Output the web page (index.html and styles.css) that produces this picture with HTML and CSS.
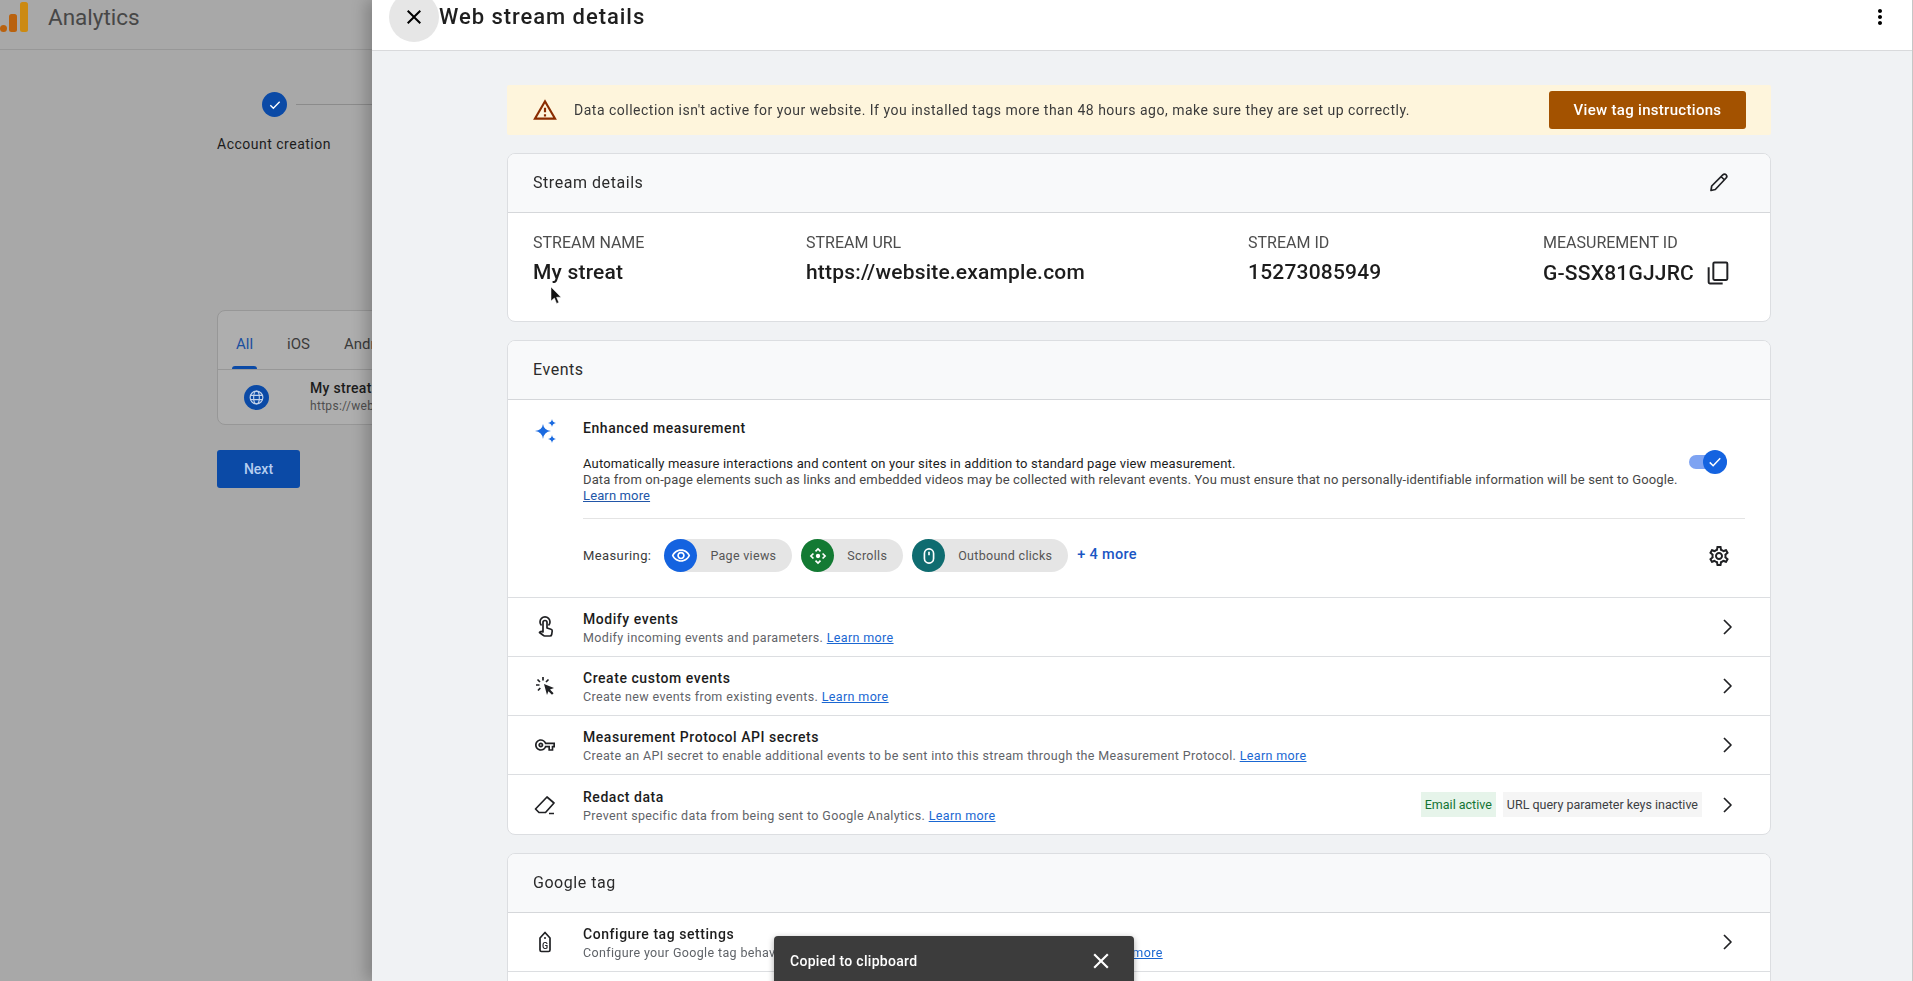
FILE: index.html
```html
<!DOCTYPE html>
<html lang="en">
<head>
    <meta charset="UTF-8">
    <title>Web stream details</title>
    <link rel="stylesheet" href="styles.css">
</head>

<body>
    <div class="page">
        <!-- setup page behind the panel, dimmed -->
        <div class="backdrop">
            <div class="app-bar">
                <svg class="logo" viewBox="0 0 28 30" width="28" height="30">
                    <circle cx="3.5" cy="26.5" r="3.5" fill="#b9620f"/>
                    <rect x="9" y="12" width="8" height="18" rx="2.5" fill="#b9620f"/>
                    <rect x="20" y="0" width="8" height="30" rx="2.5" fill="#cc8a12"/>
                </svg>
                <span class="app-name">Analytics</span>
            </div>
            <div class="setup">
                <div class="stepper">
                    <div class="step-track">
                        <span class="step-dot">
                            <svg viewBox="0 0 24 24" width="16" height="16"><path class="line-white" d="M5 12.5l4.5 4.5L19 7"/></svg>
                        </span>
                        <span class="step-line"></span>
                    </div>
                    <div class="step-label">Account creation</div>
                </div>
                <div class="stream-list">
                    <div class="stream-tabs">
                        <span class="stream-tab active">All</span>
                        <span class="stream-tab">iOS</span>
                        <span class="stream-tab">Android</span>
                    </div>
                    <div class="stream-item">
                        <span class="globe">
                            <svg viewBox="0 0 24 24" width="17" height="17">
                                <circle class="line-pale" cx="12" cy="12" r="9"/>
                                <ellipse class="line-pale" cx="12" cy="12" rx="4" ry="9"/>
                                <path class="line-pale" d="M3.5 9h17M3.5 15h17"/>
                            </svg>
                        </span>
                        <div>
                            <div class="stream-name">My streat</div>
                            <div class="stream-url">https://website.example.com</div>
                        </div>
                    </div>
                </div>
                <button class="next-btn">Next</button>
            </div>
        </div>

        <div class="panel">
            <header class="panel-head">
                <span class="close-btn">
                    <svg viewBox="0 0 24 24" width="24" height="24"><path d="M19 6.41L17.59 5 12 10.59 6.41 5 5 6.41 10.59 12 5 17.59 6.41 19 12 13.41 17.59 19 19 17.59 13.41 12z"/></svg>
                </span>
                <h1 class="panel-title">Web stream details</h1>
                <svg class="kebab" viewBox="0 0 24 24" width="24" height="24"><path d="M12 8c1.1 0 2-.9 2-2s-.9-2-2-2-2 .9-2 2 .9 2 2 2zm0 2c-1.1 0-2 .9-2 2s.9 2 2 2 2-.9 2-2-.9-2-2-2zm0 6c-1.1 0-2 .9-2 2s.9 2 2 2 2-.9 2-2-.9-2-2-2z"/></svg>
            </header>

            <main class="panel-body">
                <div class="banner">
                    <svg class="banner-icon" viewBox="0 0 24 24" width="26" height="26"><path d="M1 21h22L12 2 1 21zm3.47-2L12 5.99 19.53 19H4.47zM11 16h2v2h-2zm0-6h2v4h-2z"/></svg>
                    <span class="banner-text">Data collection isn't active for your website. If you installed tags more than 48 hours ago, make sure they are set up correctly.</span>
                    <button class="banner-btn">View tag instructions</button>
                </div>

                <section class="card">
                    <div class="card-head">
                        <span>Stream details</span>
                        <svg class="head-icon" viewBox="0 0 24 24" width="24" height="24"><path class="line-dark" d="M4 20.500l.7-4.500L15.800 4.800c1-1 2.400-1 3.300 0s.9 2.300 0 3.200L8.300 19.500zM14 6.500l3.600 3.500"/></svg>
                    </div>
                    <div class="details">
                        <div>
                            <div class="detail-label">STREAM NAME</div>
                            <div class="detail-value">My streat</div>
                        </div>
                        <div>
                            <div class="detail-label">STREAM URL</div>
                            <div class="detail-value">https://website.example.com</div>
                        </div>
                        <div>
                            <div class="detail-label">STREAM ID</div>
                            <div class="detail-value">15273085949</div>
                        </div>
                        <div>
                            <div class="detail-label">MEASUREMENT ID</div>
                            <div class="detail-value with-icon">G-SSX81GJJRC
                                <svg viewBox="0 0 24 24" width="28" height="28"><rect class="line-dark" x="8" y="3" width="12" height="15" rx="1"/><path class="line-dark" d="M4 7v13a1 1 0 0 0 1 1h11"/></svg>
                            </div>
                        </div>
                    </div>
                </section>

                <section class="card">
                    <div class="card-head"><span>Events</span></div>
                    <div class="enhanced">
                        <svg class="row-icon sparkle" viewBox="0 0 26 26" width="26" height="26">
                            <path d="M10 6Q10.8 12.2 18 13 10.8 13.8 10 21 9.2 13.8 2 13 9.2 12.2 10 6z"/>
                            <path d="M19 1Q19.4 4.6 23 5 19.4 5.4 19 9 18.6 5.4 15 5 18.6 4.6 19 1z"/>
                            <path d="M19 17Q19.4 20.6 23 21 19.4 21.4 19 25 18.6 21.4 15 21 18.6 20.6 19 17z"/>
                        </svg>
                        <div class="enhanced-body">
                            <div class="enhanced-top">
                                <div class="enhanced-text">
                                    <div class="row-title">Enhanced measurement</div>
                                    <p class="enhanced-desc">
                                        <span class="desc-dark">Automatically measure interactions and content on your sites in addition to standard page view measurement.</span><br>
                                        Data from on-page elements such as links and embedded videos may be collected with relevant events. You must ensure that no personally-identifiable information will be sent to Google.<br>
                                        <a class="learn dark" href="#">Learn more</a>
                                    </p>
                                </div>
                                <div class="toggle">
                                    <span class="toggle-knob">
                                        <svg viewBox="0 0 24 24" width="18" height="18"><path class="line-white" d="M5 12.5l4.5 4.5L19 7"/></svg>
                                    </span>
                                </div>
                            </div>
                            <div class="measuring">
                                <span class="measuring-label">Measuring:</span>
                                <span class="chip">
                                    <span class="chip-icon blue">
                                        <svg viewBox="0 0 24 24" width="20" height="20"><path d="M12 6c3.79 0 7.17 2.13 8.82 5.5C19.17 14.87 15.79 17 12 17s-7.17-2.13-8.82-5.5C4.83 8.13 8.21 6 12 6m0-2C7 4 2.73 7.11 1 11.5 2.73 15.89 7 19 12 19s9.27-3.11 11-7.5C21.27 7.11 17 4 12 4zm0 5c1.38 0 2.5 1.12 2.5 2.5S13.38 14 12 14s-2.5-1.12-2.5-2.5S10.62 9 12 9m0-2c-2.48 0-4.5 2.02-4.5 4.5S9.52 16 12 16s4.5-2.02 4.5-4.5S14.48 7 12 7z"/></svg>
                                    </span>
                                    Page views
                                </span>
                                <span class="chip">
                                    <span class="chip-icon green">
                                        <svg viewBox="0 0 24 24" width="20" height="20"><circle cx="12" cy="12" r="2.6"/><path class="line-white" d="M9 6.5l3-3 3 3M9 17.5l3 3 3-3M6.5 9l-3 3 3 3M17.5 9l3 3-3 3"/></svg>
                                    </span>
                                    Scrolls
                                </span>
                                <span class="chip">
                                    <span class="chip-icon teal">
                                        <svg viewBox="0 0 24 24" width="20" height="20"><rect class="line-white" x="6.5" y="3.5" width="11" height="17" rx="5.5"/><path class="line-white" d="M12 7v4"/></svg>
                                    </span>
                                    Outbound clicks
                                </span>
                                <a class="more-link" href="#">+ 4 more</a>
                                <svg class="gear" viewBox="0 0 24 24" width="24" height="24"><path d="M19.43 12.98c.04-.32.07-.64.07-.98 0-.34-.03-.66-.07-.98l2.11-1.65c.19-.15.24-.42.12-.64l-2-3.46c-.09-.16-.26-.25-.44-.25-.06 0-.12.01-.17.03l-2.49 1c-.52-.4-1.08-.73-1.69-.98l-.38-2.65C14.46 2.18 14.25 2 14 2h-4c-.25 0-.46.18-.49.42l-.38 2.65c-.61.25-1.17.59-1.69.98l-2.49-1c-.06-.02-.12-.03-.18-.03-.17 0-.34.09-.43.25l-2 3.46c-.13.22-.07.49.12.64l2.11 1.65c-.04.32-.07.65-.07.98 0 .33.03.66.07.98l-2.11 1.65c-.19.15-.24.42-.12.64l2 3.46c.09.16.26.25.44.25.06 0 .12-.01.17-.03l2.49-1c.52.4 1.08.73 1.69.98l.38 2.65c.03.24.24.42.49.42h4c.25 0 .46-.18.49-.42l.38-2.65c.61-.25 1.17-.59 1.69-.98l2.49 1c.06.02.12.03.18.03.17 0 .34-.09.43-.25l2-3.46c.12-.22.07-.49-.12-.64l-2.11-1.65zm-1.98-1.71c.04.31.05.52.05.73 0 .21-.02.43-.05.73l-.14 1.13.89.7 1.08.84-.7 1.21-1.27-.51-1.04-.42-.9.68c-.43.32-.84.56-1.25.73l-1.06.43-.16 1.13-.2 1.35h-1.4l-.19-1.35-.16-1.13-1.06-.43c-.43-.18-.83-.41-1.23-.71l-.91-.7-1.06.43-1.27.51-.7-1.21 1.08-.84.89-.7-.14-1.13c-.03-.31-.05-.54-.05-.74s.02-.43.05-.73l.14-1.13-.89-.7-1.08-.84.7-1.21 1.27.51 1.04.42.9-.68c.43-.32.84-.56 1.25-.73l1.06-.43.16-1.13.2-1.35h1.39l.19 1.35.16 1.13 1.06.43c.43.18.83.41 1.23.71l.91.7 1.06-.43 1.27-.51.7 1.21-1.07.85-.89.7.14 1.13zM12 8c-2.21 0-4 1.79-4 4s1.79 4 4 4 4-1.79 4-4-1.79-4-4-4zm0 6c-1.1 0-2-.9-2-2s.9-2 2-2 2 .9 2 2-.9 2-2 2z"/></svg>
                            </div>
                        </div>
                    </div>

                    <div class="row">
                        <svg class="row-icon" viewBox="0 0 24 24" width="24" height="24"><path class="line-dark" d="M8.5 10.5a5 5 0 1 1 7 0M10 17V7.5a2 2 0 0 1 4 0V13l4 1.2c.9.3 1.3 1 1.2 1.8l-.5 3.5c-.2 1-1 1.5-1.8 1.5h-5.2c-.6 0-1.1-.2-1.5-.7L6.5 17.5l1-.9c.4-.3.9-.3 1.3 0z"/></svg>
                        <div class="row-main">
                            <div class="row-title">Modify events</div>
                            <div class="row-sub">Modify incoming events and parameters. <a class="learn" href="#">Learn more</a></div>
                        </div>
                        <svg class="chevron" viewBox="0 0 24 24" width="24" height="24"><path class="line-dark" d="M9 5l7 7-7 7"/></svg>
                    </div>
                    <div class="row">
                        <svg class="row-icon" viewBox="0 0 24 24" width="24" height="24"><path d="M11 10l10 4-4 1.6 3.6 3.6-1.6 1.6-3.6-3.6L14 21z"/><path class="line-dark" d="M10 3v3.5M4.5 5.5L7 8M3 11h3.5M5 16.5L7.3 14M15.5 5.5L13 8"/></svg>
                        <div class="row-main">
                            <div class="row-title">Create custom events</div>
                            <div class="row-sub">Create new events from existing events. <a class="learn" href="#">Learn more</a></div>
                        </div>
                        <svg class="chevron" viewBox="0 0 24 24" width="24" height="24"><path class="line-dark" d="M9 5l7 7-7 7"/></svg>
                    </div>
                    <div class="row">
                        <svg class="row-icon key" viewBox="0 0 24 24" width="20" height="20"><path d="M22 19h-6v-4h-2.68c-1.14 2.42-3.6 4-6.32 4-3.86 0-7-3.14-7-7s3.14-7 7-7c2.72 0 5.17 1.58 6.32 4H24v6h-2v4zm-4-2h2v-4h2v-2H11.94l-.23-.67C11.01 8.34 9.11 7 7 7c-2.76 0-5 2.24-5 5s2.24 5 5 5c2.11 0 4.01-1.34 4.71-3.33l.23-.67H18v4zM7 15c-1.65 0-3-1.35-3-3s1.35-3 3-3 3 1.35 3 3-1.35 3-3 3zm0-4c-.55 0-1 .45-1 1s.45 1 1 1 1-.45 1-1-.45-1-1-1z"/></svg>
                        <div class="row-main">
                            <div class="row-title">Measurement Protocol API secrets</div>
                            <div class="row-sub">Create an API secret to enable additional events to be sent into this stream through the Measurement Protocol. <a class="learn" href="#">Learn more</a></div>
                        </div>
                        <svg class="chevron" viewBox="0 0 24 24" width="24" height="24"><path class="line-dark" d="M9 5l7 7-7 7"/></svg>
                    </div>
                    <div class="row">
                        <svg class="row-icon" viewBox="0 0 24 24" width="24" height="24"><path class="line-dark" d="M14 4l7 6-8.5 9.5H6L2.5 16zM16 20.5h5"/></svg>
                        <div class="row-main">
                            <div class="row-title">Redact data</div>
                            <div class="row-sub">Prevent specific data from being sent to Google Analytics. <a class="learn" href="#">Learn more</a></div>
                        </div>
                        <span class="tag tag-green">Email active</span>
                        <span class="tag tag-gray">URL query parameter keys inactive</span>
                        <svg class="chevron" viewBox="0 0 24 24" width="24" height="24"><path class="line-dark" d="M9 5l7 7-7 7"/></svg>
                    </div>
                </section>

                <section class="card">
                    <div class="card-head"><span>Google tag</span></div>
                    <div class="row">
                        <svg class="row-icon" viewBox="0 0 24 24" width="24" height="24"><path class="line-dark" d="M12 2.5l5 5.5v12c0 .8-.6 1.5-1.5 1.5h-7c-.9 0-1.5-.7-1.5-1.5V8z"/><circle cx="12" cy="8" r="1"/><text class="tag-letter" x="12" y="18.5">G</text></svg>
                        <div class="row-main">
                            <div class="row-title">Configure tag settings</div>
                            <div class="row-sub">Configure your Google tag behavior, including cross-domain linking and internal traffic. <a class="learn" href="#">Learn more</a></div>
                        </div>
                        <svg class="chevron" viewBox="0 0 24 24" width="24" height="24"><path class="line-dark" d="M9 5l7 7-7 7"/></svg>
                    </div>
                    <div class="row"></div>
                </section>
            </main>
        </div>

        <div class="toast">
            <span>Copied to clipboard</span>
            <svg viewBox="0 0 24 24" width="26" height="26"><path d="M19 6.41L17.59 5 12 10.59 6.41 5 5 6.41 10.59 12 5 17.59 6.41 19 12 13.41 17.59 19 19 17.59 13.41 12z"/></svg>
        </div>

        <svg class="cursor" viewBox="0 0 12 19" width="12" height="19"><path d="M1 1v14l3.4-3 2.2 5.4 2.2-.9L6.6 11.200H11z"/></svg>
    </div>
</body>
</html>
```

FILE: styles.css
```css
* {
    box-sizing: border-box;
}

html, body {
    margin: 0;
    padding: 0;
    height: 100%;
    overflow: hidden;
}

body {
    font-family: Roboto, "Liberation Sans", sans-serif;
    color: #202124;
}

.page {
    position: relative;
    display: flex;
    width: 100%;
    height: 981px;
    overflow: hidden;
    filter: blur(.35px);
}

/* dimmed page behind */
.backdrop {
    width: 372px;
    flex-shrink: 0;
    background: #a8a8a8;
    overflow: hidden;
}

.app-bar {
    display: flex;
    align-items: center;
    height: 50px;
    border-bottom: 1px solid #979797;
    padding: 0 0 15px 0;
}

.logo {
    flex-shrink: 0;
    margin-right: 20px;
}

.app-name {
    font-size: 22.500px;
    color: #474747;
}

.setup {
    width: 600px;
    margin-left: 217px;
}

.stepper {
    height: 260px;
    padding-top: 42px;
}

.step-track {
    display: flex;
    align-items: center;
    padding-left: 45px;
}

.step-dot {
    display: flex;
    align-items: center;
    justify-content: center;
    width: 25px;
    height: 25px;
    border-radius: 50%;
    background: #0b4aa6;
    flex-shrink: 0;
}

.step-line {
    width: 300px;
    height: 1px;
    margin-left: 9px;
    background: #8b8b8b;
}

.step-label {
    width: 115px;
    margin-top: 19px;
    font-size: 14px;
    letter-spacing: .5px;
    white-space: nowrap;
    color: #1c1c1c;
}

.stream-list {
    height: 115px;
    border: 1px solid #979797;
    border-radius: 8px;
    background: #aeaeae;
}

.stream-tabs {
    display: flex;
    height: 59px;
    border-bottom: 1px solid #979797;
    padding-left: 14px;
}

.stream-tab {
    position: relative;
    height: 58px;
    line-height: 66px;
    margin-right: 26px;
    padding: 0 4px;
    font-size: 15px;
    color: #3b3b3b;
}

.stream-tab.active {
    color: #1c4f9e;
}

.stream-tab.active::after {
    content: "";
    position: absolute;
    left: 0;
    right: 0;
    bottom: 0;
    height: 3px;
    border-radius: 3px 3px 0 0;
    background: #0b4aa6;
}

.stream-item {
    display: flex;
    align-items: center;
    height: 54px;
    padding-left: 26px;
}

.globe {
    display: flex;
    align-items: center;
    justify-content: center;
    width: 25px;
    height: 25px;
    margin-right: 41px;
    border-radius: 50%;
    background: #0b4aa6;
}

.stream-name {
    font-size: 14px;
    font-weight: 500;
    letter-spacing: .3px;
    line-height: 18px;
    color: #1c1c1c;
    white-space: nowrap;
}

.stream-url {
    font-size: 12px;
    letter-spacing: .3px;
    line-height: 19px;
    color: #4e4e4e;
    white-space: nowrap;
}

.next-btn {
    display: block;
    width: 83px;
    height: 38px;
    margin-top: 25px;
    border: none;
    border-radius: 3px;
    background: #0b4aa6;
    color: #b5cdf0;
    font-family: inherit;
    font-size: 14px;
    font-weight: 500;
}

/* the sliding panel */
.panel {
    flex: 1;
    min-width: 0;
    background: #f0f2f4;
    border-right: 1px solid #c6c6c6;
    box-shadow: -6px 0 14px rgba(0, 0, 0, .22);
    z-index: 1;
}

.panel-head {
    display: flex;
    align-items: center;
    height: 51px;
    background: #fff;
    border-bottom: 1px solid #d9dadc;
}

.close-btn {
    display: flex;
    align-items: center;
    justify-content: center;
    width: 50px;
    height: 50px;
    margin: -16px 0 0 17px;
    border-radius: 50%;
    background: #e6e6e6;
    flex-shrink: 0;
}

.panel-title {
    margin: -18px 0 0 0;
    font-size: 22px;
    font-weight: 500;
    letter-spacing: .95px;
    color: #1f1f1f;
}

.kebab {
    margin: -16px 20px 0 auto;
}

.panel-body {
    padding: 34px 141px 0 135px;
}

.banner {
    display: flex;
    align-items: center;
    height: 50px;
    padding: 0 25px 0 25px;
    background: #fef5dc;
    border-radius: 2px;
}

.banner-icon {
    fill: #8a2c00;
    flex-shrink: 0;
    margin-right: 16px;
}

.banner-text {
    font-size: 14px;
    letter-spacing: .5px;
    color: #3b3b3b;
}

.banner-btn {
    margin-left: auto;
    width: 197px;
    height: 38px;
    border: none;
    border-radius: 3px;
    background: #a35200;
    color: #fff;
    font-family: inherit;
    font-size: 15px;
    font-weight: 500;
    letter-spacing: .3px;
}

.card {
    margin-top: 18px;
    background: #fff;
    border: 1px solid #dcdee1;
    border-radius: 8px;
    overflow: hidden;
}

.card-head {
    display: flex;
    align-items: center;
    justify-content: space-between;
    height: 59px;
    padding: 0 18px 2px 25px;
    background: #f8f9fa;
    border-bottom: 1px solid #d5d7da;
    font-size: 16px;
    letter-spacing: .55px;
    color: #2b2b2b;
}

.head-icon {
    margin-right: 21px;
}

.details {
    display: grid;
    grid-template-columns: 273px 442px 295px auto;
    height: 108px;
    padding: 20px 0 0 25px;
}

.detail-label {
    font-size: 16px;
    line-height: 20px;
    color: #4d4d4d;
}

.detail-value {
    margin-top: 6px;
    font-size: 21px;
    font-weight: 500;
    line-height: 26px;
    letter-spacing: .2px;
    color: #1c1c1c;
}

.with-icon {
    display: flex;
    align-items: center;
    gap: 10px;
}

.enhanced {
    display: flex;
    align-items: flex-start;
    height: 198px;
    padding: 18px 0 0 25px;
    border-bottom: 1px solid #dcdee1;
}

.row-icon {
    flex-shrink: 0;
    margin-right: 26px;
    fill: #202124;
}

.row-icon.key {
    margin-left: 2px;
    margin-right: 28px;
}

.sparkle {
    fill: #1a6ae0;
    margin-right: 24px;
}

.enhanced-body {
    flex: 1;
    margin-right: 25px;
}

.enhanced-top {
    display: flex;
    align-items: flex-start;
    height: 101px;
    border-bottom: 1px solid #e4e4e4;
}

.enhanced-text {
    flex: 1;
}

.row-title {
    font-size: 14px;
    font-weight: 500;
    letter-spacing: .55px;
    line-height: 20px;
    color: #1c1c1c;
}

.enhanced-desc {
    margin: 18px 0 0 0;
    font-size: 13px;
    line-height: 16px;
    letter-spacing: .13px;
    color: #474747;
    white-space: nowrap;
}

.desc-dark {
    letter-spacing: .17px;
    color: #1c1c1c;
}

.toggle {
    position: relative;
    width: 38px;
    height: 14px;
    margin: 37px 18px 0 0;
    border-radius: 7px;
    background: #7ea3f2;
}

.toggle-knob {
    position: absolute;
    top: -5px;
    right: 0;
    display: flex;
    align-items: center;
    justify-content: center;
    width: 24px;
    height: 24px;
    border-radius: 50%;
    background: #1463e0;
}

.measuring {
    display: flex;
    align-items: center;
    gap: 9px;
    height: 73px;
    font-size: 13px;
}

.measuring-label {
    margin-right: 4px;
    letter-spacing: .4px;
    color: #3b3b3b;
}

.chip {
    display: flex;
    align-items: center;
    height: 33px;
    padding-right: 16px;
    border-radius: 17px;
    background: #e5e5e5;
    font-size: 12.500px;
    letter-spacing: .3px;
    color: #555;
}

.chip-icon {
    display: flex;
    align-items: center;
    justify-content: center;
    width: 33px;
    height: 33px;
    margin-right: 13px;
    border-radius: 50%;
    fill: #fff;
}

.blue { background: #1463e0; }
.green { background: #137a33; }
.teal { background: #0f6c70; }

.more-link {
    margin-top: -3px;
    font-size: 14.500px;
    font-weight: 500;
    letter-spacing: .3px;
    color: #1a56c4;
    text-decoration: none;
}

.gear {
    margin: 0 14px 0 auto;
    fill: #202124;
}

.row {
    display: flex;
    align-items: center;
    height: 59px;
    padding-left: 25px;
    border-bottom: 1px solid #dcdee1;
}

.row:last-child {
    border-bottom: none;
}

.row-main {
    flex: 1;
    min-width: 0;
    padding-top: 3px;
}

.row-main .row-title {
    line-height: 18px;
}

.row-sub {
    margin-top: 1px;
    font-size: 12.500px;
    line-height: 18px;
    letter-spacing: .36px;
    color: #5f6368;
}

.learn {
    color: #1a67d2;
    text-decoration: underline;
}

.learn.dark {
    color: #2256a8;
}

.tag {
    display: flex;
    align-items: center;
    height: 25px;
    padding: 0 4px;
    font-size: 12.500px;
}

.tag-green {
    background: #e6f4ea;
    color: #137333;
    margin-right: 7px;
}

.tag-gray {
    background: #f5f5f5;
    color: #3c4043;
}

.chevron {
    flex-shrink: 0;
    margin: 0 31px 0 13px;
}

.toast {
    position: absolute;
    left: 774px;
    top: 936px;
    display: flex;
    align-items: center;
    justify-content: space-between;
    width: 360px;
    height: 50px;
    padding: 0 20px 0 16px;
    background: #3c3c3c;
    border-radius: 4px 4px 0 0;
    box-shadow: 0 2px 6px rgba(0, 0, 0, .35);
    color: #fff;
    font-size: 14px;
    font-weight: 500;
    letter-spacing: .3px;
    z-index: 3;
}

.toast svg {
    fill: #fff;
}

.cursor {
    position: absolute;
    left: 550px;
    top: 286px;
    fill: #111;
    stroke: #fff;
    stroke-width: .5;
    z-index: 3;
}

.line-white,
.line-pale,
.line-dark {
    fill: none;
}

.line-white {
    stroke: #fff;
    stroke-width: 2;
}

.line-pale {
    stroke: #c3d3ea;
    stroke-width: 1.6;
}

.line-dark {
    stroke: #202124;
    stroke-width: 1.7;
    stroke-linejoin: round;
}

.tag-letter {
    font-family: Roboto, sans-serif;
    font-size: 9px;
    font-weight: 500;
    text-anchor: middle;
}
```
